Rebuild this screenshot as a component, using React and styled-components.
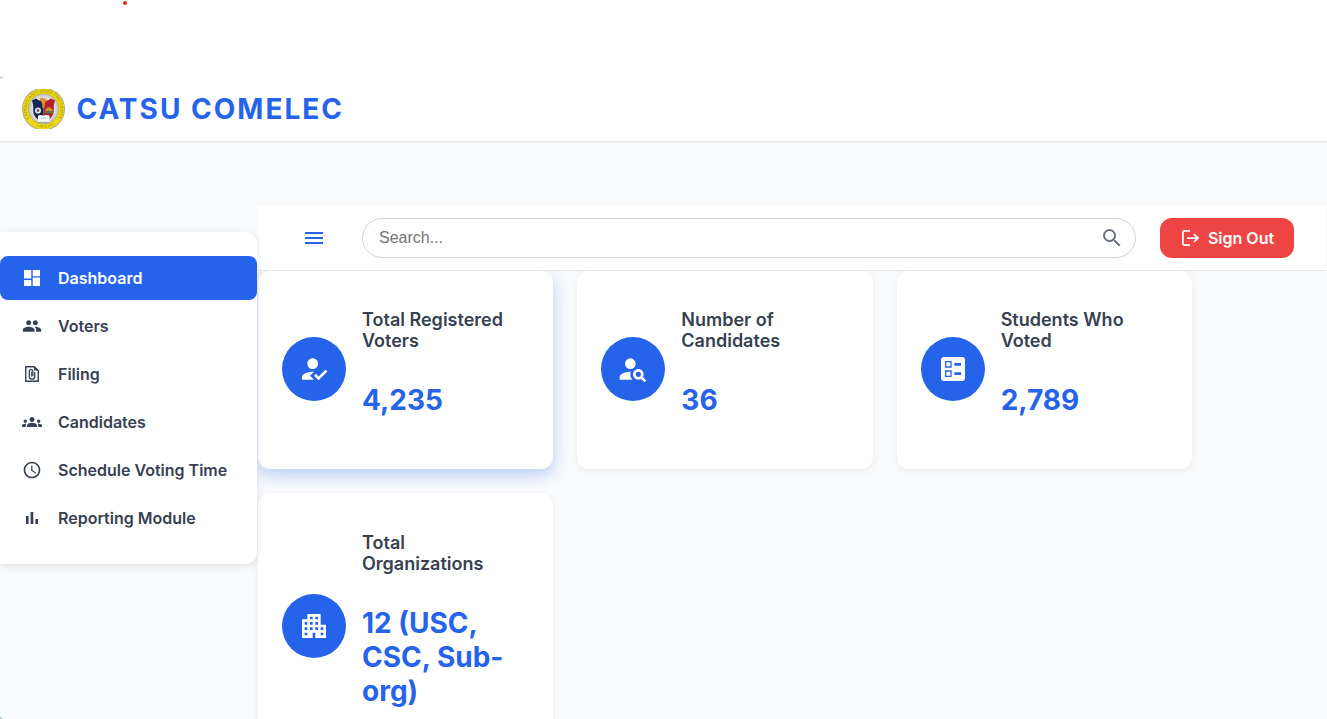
import React from "react";
import styled, { createGlobalStyle, css } from "styled-components";
import {
  MdGroup, MdGroups, MdSchedule,
  MdHowToReg, MdPersonSearch, MdBallot, MdApartment, MdMenu, MdSearch,
} from "react-icons/md";

const GlobalStyle = createGlobalStyle`
  * { box-sizing: border-box; }
  body { margin: 0; background: #fff; font-family: Inter, "Liberation Sans", sans-serif; overflow: hidden; }
`;

const Page = styled.div`
  position: relative;
  display: flex;
  flex-direction: column;
  height: 719px;
  padding-top: 77px;
  overflow: hidden;
  background: #fff;
`;

const RecordDot = styled.span`
  position: absolute;
  top: 1px;
  left: 123px;
  width: 4px;
  height: 4px;
  border-radius: 50%;
  background: #e8262a;
`;

const Corner = styled.svg`
  position: absolute;
  left: 0;
  top: ${(p) => p.$top}px;
  z-index: 5;
`;

const Header = styled.header`
  display: flex;
  align-items: center;
  gap: 11.5px;
  flex: none;
  height: 64px;
  padding-left: 22px;
  background: #fff;
  box-shadow: 0 1px 2px rgba(0, 0, 0, 0.12);
  z-index: 1;
`;

const Seal = styled.svg`
  display: block;
  width: 43px;
  height: 40px;
`;

const Brand = styled.h1`
  margin: 0;
  font-size: 28px;
  line-height: 34px;
  font-weight: 700;
  letter-spacing: 2px;
  color: #2563eb;
`;

const Body = styled.div`
  display: flex;
  align-items: flex-start;
  flex: 1;
  min-height: 0;
  padding-right: 1px;
  background: #f8fafc;
`;

const Sidebar = styled.nav`
  display: flex;
  flex-direction: column;
  gap: 4px;
  flex: none;
  width: 257px;
  height: 332px;
  margin: 91px 1px 0 0;
  padding-top: 24px;
  background: #fff;
  border-radius: 0 12px 12px 0;
  box-shadow: 0 2px 8px rgba(0, 0, 0, 0.1);
  z-index: 2;
`;

const NavItem = styled.a`
  display: flex;
  align-items: center;
  gap: 16px;
  height: 44px;
  padding-left: 22px;
  border-radius: 8px;
  font-size: 16px;
  font-weight: 600;
  color: #374151;
  ${(p) => p.$active && css`
    background: #2563eb;
    color: #fff;
  `}
`;

const NavIcon = styled.span`
  display: flex;
  align-items: center;
  justify-content: center;
  width: 20px;
  height: 20px;
  font-size: 20px;
  svg { flex: none; }
`;

const Main = styled.main`
  flex: 1;
  min-width: 0;
  margin-top: 65px;
`;

const Toolbar = styled.div`
  position: relative;
  display: flex;
  align-items: center;
  gap: 24px;
  height: 65px;
  padding: 0 32px 0 44px;
  background: #fff;
  border-bottom: 1px solid #e5e7eb;
  z-index: 1;
`;

const MenuButton = styled.button`
  display: flex;
  width: 36px;
  padding: 6px 0;
  justify-content: flex-start;
  border: 0;
  background: none;
  color: #2563eb;
  font-size: 24px;
`;

const SearchBox = styled.label`
  display: flex;
  align-items: center;
  flex: 1;
  height: 40px;
  padding: 0 11px 0 16px;
  border: 1px solid #d1d5db;
  border-radius: 20px;
  color: #6b7280;
  font-size: 24px;
`;

const SearchInput = styled.input`
  flex: 1;
  padding: 0;
  border: 0;
  outline: 0;
  background: none;
  font: 16px "Liberation Sans", Arial, sans-serif;
  &::placeholder { color: #757575; }
`;

const SignOut = styled.button`
  display: flex;
  align-items: center;
  justify-content: center;
  gap: 8px;
  width: 134px;
  height: 40px;
  padding: 0;
  border: 0;
  border-radius: 12px;
  background: #ef4444;
  color: #fff;
  font: 600 16px Inter, sans-serif;
`;

const Cards = styled.section`
  display: grid;
  grid-template-columns: repeat(3, 1fr);
  gap: 24px;
  width: 934px;
`;

const Card = styled.article`
  display: flex;
  align-items: center;
  gap: 16px;
  height: ${(p) => (p.$tall ? 268 : 198)}px;
  padding: 0 24px;
  background: #fff;
  border-radius: 12px;
  box-shadow: ${(p) => (p.$raised
    ? "0 6px 16px rgba(37, 99, 235, 0.3)"
    : "0 2px 8px rgba(0, 0, 0, 0.06)")};
`;

const Badge = styled.span`
  display: flex;
  align-items: center;
  justify-content: center;
  flex: none;
  width: 64px;
  height: 64px;
  margin-top: -2px;
  border-radius: 50%;
  background: #2563eb;
  color: #fff;
  font-size: 32px;
`;

const CardText = styled.div`
  align-self: flex-start;
  flex: 1;
  padding-top: ${(p) => (p.$tall ? 39 : 38)}px;
`;

const CardTitle = styled.h2`
  margin: 0 0 32px;
  font-size: 18px;
  line-height: 21px;
  font-weight: 600;
  color: #374151;
`;

const CardValue = styled.p`
  margin: 0;
  font-size: 28px;
  line-height: 34px;
  font-weight: 700;
  color: #2563eb;
`;

function DashboardIcon() {
  return (
    <svg width="20" height="20" viewBox="0 0 20 20" fill="currentColor">
      <path d="M2 2h7.300v8.500H2zM10.700 2H18v6.200h-7.300zM2 11.900h7.300V18H2zM10.700 9.600H18V18h-7.300z" />
    </svg>
  );
}

function FilingIcon() {
  return (
    <svg width="20" height="20" viewBox="0 0 20 20" fill="none" stroke="currentColor">
      <path d="M3.750 2.750 H12.2 L16.250 6.3 V17.25 H3.750 Z" strokeWidth="1.4" />
      <path d="M12 2.2 V6.5 H16.6 Z" fill="currentColor" stroke="none" />
      <path d="M12.7 8 V12.4 A2.7 2.7 0 0 1 7.3 12.4 V7.3 A1.75 1.75 0 0 1 10.8 7.3 V12.2" strokeWidth="1.3" />
      <path d="M9.4 7.6 V12.6" strokeWidth="0.9" />
    </svg>
  );
}

function BarsIcon() {
  return (
    <svg width="20" height="20" viewBox="0 0 20 20" fill="currentColor">
      <path d="M4 8h2.6v8H4zM8.6 4h2.7v12H8.600zM13.400 11h2.600v5h-2.600z" />
    </svg>
  );
}

function SignOutIcon() {
  return (
    <svg width="20" height="20" viewBox="0 0 20 20" fill="none" stroke="currentColor" strokeWidth="1.75">
      <path d="M10 2.900H4.400Q2.900 2.900 2.900 4.400V15.600Q2.900 17.100 4.400 17.100H10" />
      <path d="M7 10H18M14 6.100L18 10L14 13.900" />
    </svg>
  );
}

const NAV = [
  { label: "Dashboard", Icon: DashboardIcon, active: true },
  { label: "Voters", Icon: MdGroup },
  { label: "Filing", Icon: FilingIcon },
  { label: "Candidates", Icon: MdGroups },
  { label: "Schedule Voting Time", Icon: MdSchedule },
  { label: "Reporting Module", Icon: BarsIcon },
];

const STATS = [
  { title: "Total Registered Voters", value: "4,235", Icon: MdHowToReg, raised: true },
  { title: "Number of Candidates", value: "36", Icon: MdPersonSearch },
  { title: "Students Who Voted", value: "2,789", Icon: MdBallot },
  { title: "Total Organizations", value: "12 (USC, CSC, Sub-org)", Icon: MdApartment, tall: true },
];

function UniversitySeal() {
  return (
    <Seal viewBox="0 0 43 40">
      <defs>
        <path id="ringTop" d="M7.2 29.5 A17 17 0 1 1 35.8 29.5" />
        <path id="ringBottom" d="M10 34.5 A18.5 18.5 0 0 0 33 34.5" />
        <radialGradient id="plate">
          <stop offset="0.5" stopColor="#f4f4f4" />
          <stop offset="1" stopColor="#c4c5ca" />
        </radialGradient>
      </defs>
      <circle cx="21.5" cy="20" r="21.5" fill="#aaa99c" />
      <circle cx="21.5" cy="20" r="20.6" fill="#ecd90f" />
      <circle cx="21.5" cy="20" r="15.2" fill="url(#plate)" stroke="#b5a520" strokeWidth="0.6" />
      <text fontSize="4.4" fill="#8a8014" fontFamily="Liberation Serif, serif">
        <textPath href="#ringTop" textLength="72">CATANDUANES STATE UNIVERSITY</textPath>
      </text>
      <text fontSize="2.8" fill="#6b6418" fontFamily="Liberation Serif, serif">
        <textPath href="#ringBottom" startOffset="5">• VIRAC, 1971 •</textPath>
      </text>
      <path d="M10 11.5 L14 9.5 L17 11.5 H21.5 V33 C15 31 11.2 27 11.2 21 V16 Z" fill="#142454" />
      <path d="M33 11.5 L29 9.5 L26 11.5 H21.5 V33 C28 31 31.8 27 31.8 21 V16 Z" fill="#b51f2b" />
      <path d="M18 11 C17 8 20 10 20 8.5 C22 11 24 8 24.5 11 L23 14 L22.5 19 H20.5 L20 14 Z" fill="#e58d24" />
      <circle cx="16" cy="21.5" r="3.1" fill="#dfe3e5" />
      <circle cx="16" cy="21.5" r="1.4" fill="#526174" />
      <path d="M23.5 20.5 Q26.5 16 30.5 20.5 V24 H23.5 Z" fill="#c69b25" />
      <path d="M24 22 H30.5 V24.5 H24 Z" fill="#527447" />
      <path d="M16 26.5 Q19 25.5 21.5 26.8 Q24 25.5 27.5 26.5 V33 H16 Z" fill="#fafafa" />
      <path d="M19 29 H24 M16.5 33.3 H27" stroke="#8c8c8c" strokeWidth="0.7" />
    </Seal>
  );
}

export default function App() {
  return (
    <Page>
      <GlobalStyle />
      <RecordDot />
      <Corner $top={77} width="5" height="3"><path d="M0 0H5Q1 0 0 2Z" fill="#a9c5cc" /></Corner>
      <Corner $top={716} width="5" height="3"><path d="M0 0Q1 2.5 5 3H0Z" fill="#a9c5cc" /></Corner>
      <Header>
        <UniversitySeal />
        <Brand>CATSU COMELEC</Brand>
      </Header>
      <Body>
        <Sidebar>
          {NAV.map(({ label, Icon, active }) => (
            <NavItem key={label} $active={active}>
              <NavIcon><Icon /></NavIcon>
              {label}
            </NavItem>
          ))}
        </Sidebar>
        <Main>
          <Toolbar>
            <MenuButton aria-label="Menu"><MdMenu /></MenuButton>
            <SearchBox>
              <SearchInput placeholder="Search..." />
              <MdSearch />
            </SearchBox>
            <SignOut><SignOutIcon />Sign Out</SignOut>
          </Toolbar>
          <Cards>
            {STATS.map(({ title, value, Icon, raised, tall }) => (
              <Card key={title} $raised={raised} $tall={tall}>
                <Badge><Icon /></Badge>
                <CardText $tall={tall}>
                  <CardTitle>{title}</CardTitle>
                  <CardValue>{value}</CardValue>
                </CardText>
              </Card>
            ))}
          </Cards>
        </Main>
      </Body>
    </Page>
  );
}
